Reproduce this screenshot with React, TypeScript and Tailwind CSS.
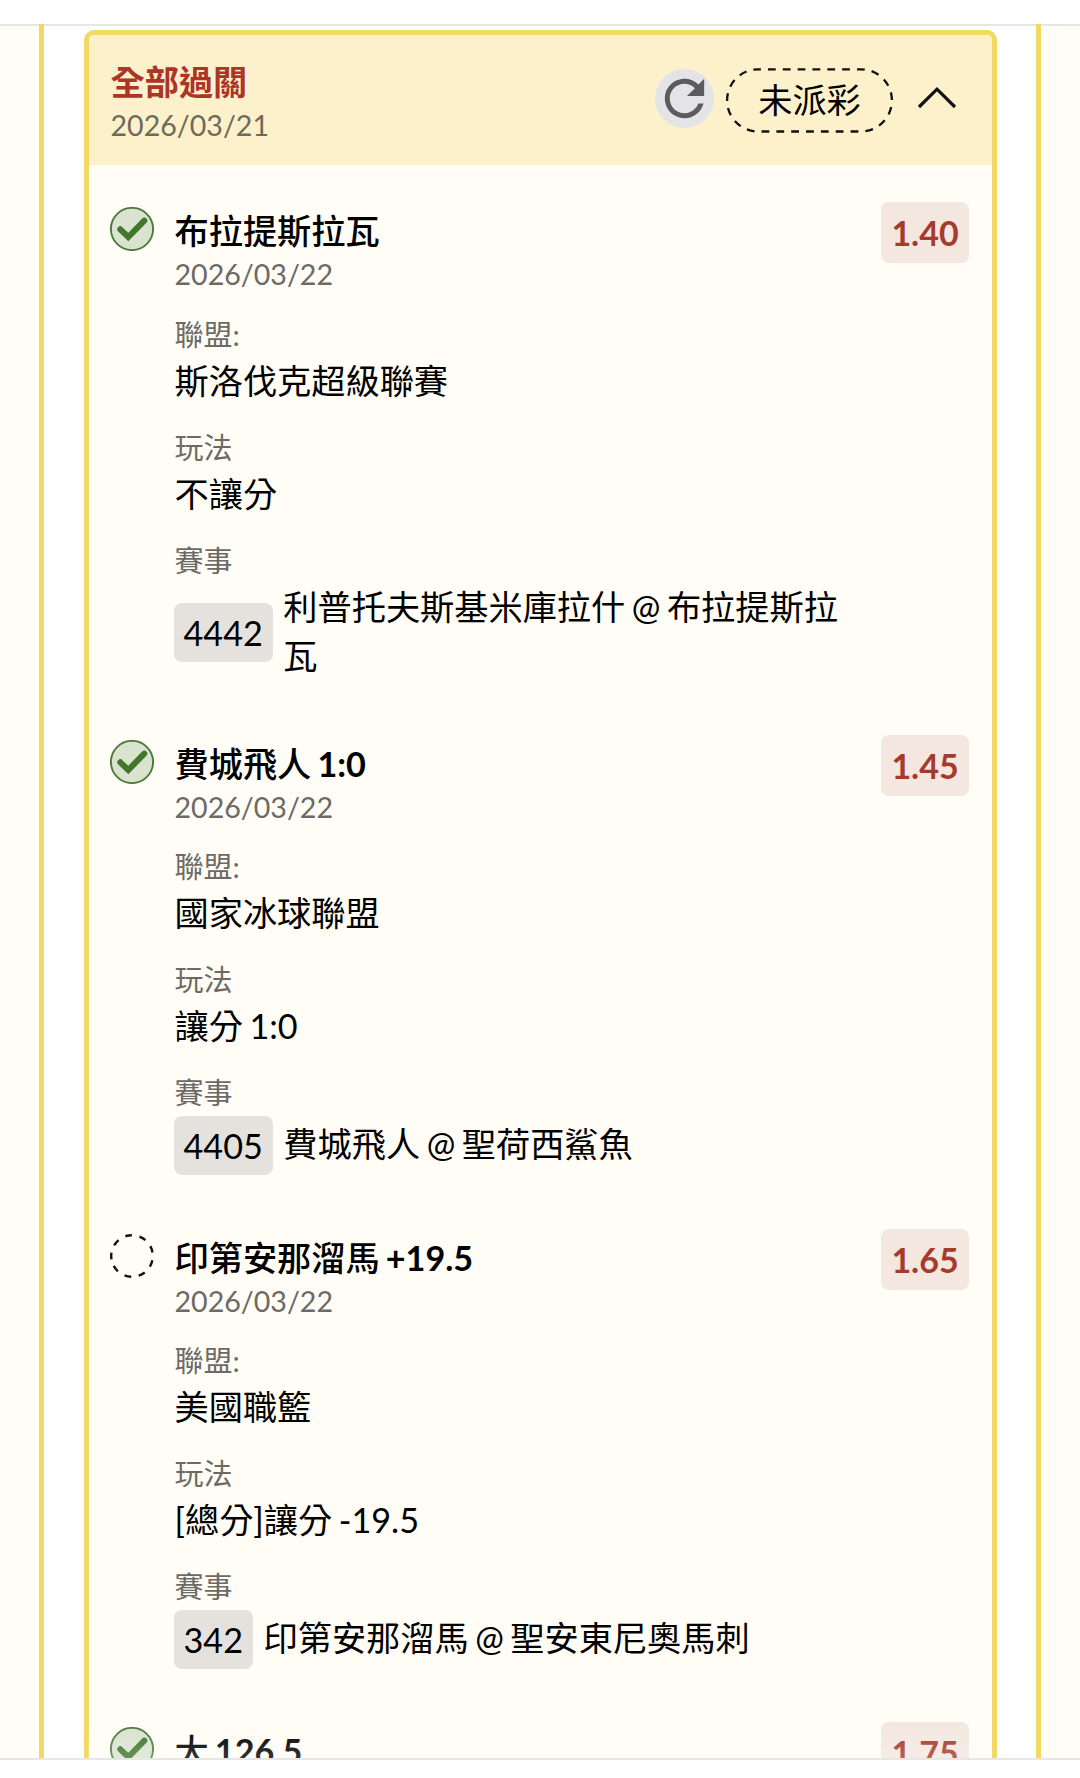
type Leg = {
  won: boolean;
  title: string;
  extra?: string;
  date?: string;
  odds: string;
  league?: string;
  play?: string;
  code?: string;
  match?: string;
};

const legs: Leg[] = [
  { won: true, title: "布拉提斯拉瓦", date: "2026/03/22", odds: "1.40", league: "斯洛伐克超級聯賽", play: "不讓分", code: "4442", match: "利普托夫斯基米庫拉什 @ 布拉提斯拉瓦" },
  { won: true, title: "費城飛人", extra: "1:0", date: "2026/03/22", odds: "1.45", league: "國家冰球聯盟", play: "讓分 1:0", code: "4405", match: "費城飛人 @ 聖荷西鯊魚" },
  { won: false, title: "印第安那溜馬", extra: "+19.5", date: "2026/03/22", odds: "1.65", league: "美國職籃", play: "[總分]讓分 -19.5", code: "342", match: "印第安那溜馬 @ 聖安東尼奧馬刺" },
  { won: true, title: "大", extra: "126.5", odds: "1.75" },
];

function StatusIcon({ won }: { won: boolean }) {
  return (
    <svg viewBox="0 0 44 44" className="mt-[5px] -ml-[0.5px] h-11 w-11 shrink-0" fill="none">
      {won ? (
        <>
          <circle cx="22" cy="22" r="21.1" fill="#d9e3d0" stroke="#4b7a3a" strokeWidth="1.9" />
          <path d="M10.3 22.3 L18.3 30 L34.3 13.6" stroke="#41762b" strokeWidth="6" strokeLinecap="round" />
        </>
      ) : (
        <circle cx="22" cy="22" r="20.8" stroke="#111" strokeWidth="2.4" strokeDasharray="6.8 7.72" transform="rotate(170.6 22 22)" />
      )}
    </svg>
  );
}

function Field({ label, children }: { label: string; children: React.ReactNode }) {
  return (
    <div className="mb-[22px] last:mb-0">
      <div className="mb-[0.5px] text-[29px] leading-[41.5px] text-[#6b6a66]">{label}</div>
      {children}
    </div>
  );
}

function LegRow({ leg }: { leg: Leg }) {
  return (
    <div className="flex items-start">
      <StatusIcon won={leg.won} />
      <div className="ml-[20.5px] w-[690px] pt-[4px]">
        <div className="text-[34.2px] leading-[49px] font-medium">
          {leg.title}
          {leg.extra && <span className="font-bold"> {leg.extra}</span>}
        </div>
        {leg.date && <div className="mb-[20.5px] text-[28.6px] leading-[38px] text-[#6b6a66]">{leg.date}</div>}
        {leg.league && (
          <>
            <Field label="聯盟:">
              <div className="text-[34.2px] leading-[49px]">{leg.league}</div>
            </Field>
            <Field label="玩法">
              <div className="text-[34.2px] leading-[49px]">{leg.play}</div>
            </Field>
            <Field label="賽事">
              <div className="flex items-center text-[34.2px] leading-[49px]">
                <span className="mt-[1.5px] mr-[10.5px] -mb-[1.5px] -ml-px flex h-[59px] shrink-0 items-center rounded-lg bg-[#e5e2dd] px-[10px]">{leg.code}</span>
                <span>{leg.match}</span>
              </div>
            </Field>
          </>
        )}
      </div>
      <div className="ml-auto flex h-[61px] w-[88px] items-center justify-center rounded-lg bg-[#f4e7e0] text-[34px] font-bold text-[#a53a2d]">
        {leg.odds}
      </div>
    </div>
  );
}

export default function App() {
  return (
    <div className="flex h-[1778px] w-[1080px] flex-col bg-white font-['Lato','Noto_Sans_CJK_TC',sans-serif] text-black [word-spacing:-2.2px]">
      <div className="h-[26px] shrink-0 border-b-2 border-[#e6e6e2]" />
      <div className="relative -mt-[2px] flex h-[1734px] shrink-0 overflow-hidden">
        <div className="w-[44px] shrink-0 border-r-[5px] border-[#f2d966] pt-[2px]">
          <div className="h-full bg-[#fffdf5]" />
        </div>
        <div className="flex-1 pt-[6px]">
          <div className="mr-[39.5px] ml-[39.5px] h-[2400px] overflow-hidden rounded-[10px] border-[5px] border-[#f2d966] bg-[#fffdf5]">
            <div className="flex h-[130px] bg-[#fcf1cb] pl-[22px]">
              <div className="pt-[21.5px]">
                <div className="text-[34.2px] leading-[49px] font-bold text-[#ac3527]">全部過關</div>
                <div className="text-[28.6px] leading-[38px] text-[#6e6a58]">2026/03/21</div>
              </div>
              <div className="mt-[33px] mr-[34.5px] ml-auto flex h-[65px] items-center self-start">
                <div className="mr-[12px] mb-[5px] flex h-[59px] w-[59px] items-center justify-center rounded-full bg-[#e4e4e6]">
                  <svg viewBox="0 0 24 24" className="h-[59px] w-[59px]" fill="#5c5c5e">
                    <path d="M17.65 6.35A7.95 7.95 0 0 0 12 4c-4.42 0-7.99 3.58-7.99 8s3.57 8 7.99 8c3.73 0 6.84-2.55 7.73-6h-2.08A5.99 5.99 0 0 1 12 18c-3.31 0-6-2.69-6-6s2.69-6 6-6c1.66 0 3.14.69 4.22 1.78L13 11h7V4z" />
                  </svg>
                </div>
                <div className="relative flex h-[65px] w-[167px] items-center justify-center text-[34.2px]">
                  <svg viewBox="0 0 167 65" className="absolute inset-0 h-full w-full" fill="none">
                    <rect x="1.1" y="1.3" width="164.8" height="62.2" rx="31" stroke="#111" strokeWidth="2.3" strokeDasharray="7.8 7.04" strokeDashoffset="5" />
                  </svg>
                  <span className="-mt-px">未派彩</span>
                </div>
                <svg viewBox="0 0 40 24" className="mb-[5px] ml-[24px] h-6 w-10" fill="none">
                  <path d="M2 21 L20 3.2 L38 21" stroke="#111" strokeWidth="3.2" />
                </svg>
              </div>
            </div>
            <div className="flex flex-col gap-[55.3px] pt-[37px] pr-[22.5px] pl-[22px]">
              {legs.map((leg) => (
                <LegRow key={leg.odds} leg={leg} />
              ))}
            </div>
          </div>
        </div>
        <div className="w-[44px] shrink-0 border-l-[5px] border-[#f2d966] pt-[2px]">
          <div className="h-full bg-[#fffdf5]" />
        </div>
        <div className="absolute inset-x-[88px] bottom-0 h-[36px] bg-linear-to-b from-white/0 to-white/20" />
      </div>
      <div className="h-[2px] shrink-0 bg-[#e6e6e6]" />
    </div>
  );
}
